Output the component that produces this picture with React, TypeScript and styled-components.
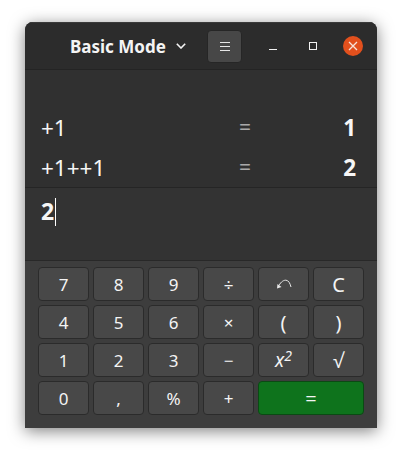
import styled, { createGlobalStyle } from "styled-components";

const GlobalStyle = createGlobalStyle`
  html, body {
    margin: 0;
    padding: 0;
    background: #fff;
    overflow: hidden;
  }
  body {
    font-family: "Noto Sans", "Open Sans", sans-serif;
  }
`;

const Page = styled.div`
  width: 402px;
  height: 456px;
  padding: 22px 25px 28px;
  box-sizing: border-box;
`;

const Window = styled.div`
  width: 352px;
  height: 406px;
  display: flex;
  flex-direction: column;
  border-radius: 8px 8px 0 0;
  overflow: hidden;
  box-shadow: 0 3px 16px rgba(0, 0, 0, 0.5);
  background: #303030;
  color: #f6f6f6;
`;

const HeaderBar = styled.header`
  height: 48px;
  flex: none;
  display: flex;
  align-items: center;
  box-sizing: border-box;
  background: #2c2c2c;
  border-top: 1px solid #3a3a3a;
  border-bottom: 1px solid #242424;
`;

const ModeTitle = styled.div`
  margin-left: 45px;
  width: 118px;
  display: flex;
  align-items: center;
  gap: 10px;
  font-size: 17px;
  font-weight: 700;
  color: #f4f4f4;
  white-space: nowrap;
`;

const MenuButton = styled.div`
  margin-left: 19px;
  width: 35px;
  height: 33px;
  display: flex;
  align-items: center;
  justify-content: center;
  box-sizing: border-box;
  background: #474747;
  border: 1px solid #262626;
  border-radius: 4px;
`;

const WindowControl = styled.div<{ $left: number }>`
  margin-left: ${(p) => p.$left}px;
  width: 20px;
  height: 20px;
  display: flex;
  align-items: center;
  justify-content: center;
`;

const CloseControl = styled(WindowControl)`
  border-radius: 50%;
  background: #e2501d;
`;

const History = styled.section`
  height: 118px;
  flex: none;
  box-sizing: border-box;
  padding-top: 37px;
  background: #303030;
  border-bottom: 1px solid #252525;
`;

const HistoryRow = styled.div`
  height: 40px;
  display: grid;
  grid-template-columns: 184px 40px 1fr;
  align-items: center;
  padding: 0 21px 0 16px;
  font-size: 22.5px;
`;

const Equals = styled.span`
  text-align: center;
  color: #a9a9a9;
  font-size: 21px;
`;

const Result = styled.span`
  text-align: right;
  font-weight: 700;
`;

const InputArea = styled.section`
  height: 73px;
  flex: none;
  box-sizing: border-box;
  padding: 7px 0 0 16px;
  background: #333333;
  border-bottom: 1px solid #282828;
  font-size: 23px;
  font-weight: 700;
  line-height: 32px;
  display: flex;
  align-items: flex-start;
`;

const Caret = styled.span`
  width: 1px;
  height: 28px;
  margin: 3px 0 0 1px;
  background: #fff;
`;

const Keypad = styled.section`
  flex: 1;
  display: grid;
  grid-template-columns: repeat(6, 51px);
  grid-auto-rows: 34px;
  gap: 4px;
  padding: 6px 13px 0;
  background: #3d3d3d;
`;

const Key = styled.button<{ $wide?: boolean; $accent?: boolean; $large?: boolean }>`
  grid-column: ${(p) => (p.$wide ? "span 2" : "auto")};
  padding: 0;
  display: flex;
  align-items: center;
  justify-content: center;
  box-sizing: border-box;
  font-family: inherit;
  font-size: ${(p) => (p.$large ? 20 : 17)}px;
  color: #f4f4f4;
  background: ${(p) => (p.$accent ? "#0e731c" : "#484848")};
  border: 1px solid ${(p) => (p.$accent ? "#0a4a13" : "#2b2b2b")};
  border-radius: 4px;
`;

const Square = styled.span`
  font-style: italic;
  font-size: 19px;
  sup {
    font-size: 14px;
    line-height: 0;
    vertical-align: 6px;
  }
`;

const keys = ["7", "8", "9", "÷", "undo", "C", "4", "5", "6", "×", "(", ")", "1", "2", "3", "−", "x2", "√", "0", ",", "%", "+"];
const largeKeys = ["C", "(", ")", "√"];

function KeyLabel({ value }: { value: string }) {
  if (value === "undo") {
    return (
      <svg width="16" height="10" viewBox="0 0 16 10" fill="none" stroke="#e8e8e8" strokeWidth="1">
        <path d="M3 6.500C5 2.500 8 1 10 1.200C12.500 1.500 14 4 15 8" />
        <path d="M1 9.500L1.500 5L5.500 8Z" fill="#e8e8e8" stroke="none" />
      </svg>
    );
  }
  if (value === "x2") {
    return (
      <Square>
        x<sup>2</sup>
      </Square>
    );
  }
  return <>{value}</>;
}

export default function App() {
  return (
    <Page>
      <GlobalStyle />
      <Window>
        <HeaderBar>
          <ModeTitle>
            Basic Mode
            <svg width="10" height="6" viewBox="0 0 10 6" fill="none" stroke="#f4f4f4" strokeWidth="1.6">
              <path d="M0.800 0.800 L5 5 L9.200 0.800" />
            </svg>
          </ModeTitle>
          <MenuButton>
            <svg width="10" height="9" viewBox="0 0 10 9" stroke="#e6e6e6" strokeWidth="1">
              <path d="M0 0.500H10M0 4.500H10M0 8.500H10" />
            </svg>
          </MenuButton>
          <WindowControl $left={21}>
            <svg width="8" height="8" viewBox="0 0 8 8" stroke="#f2f2f2" strokeWidth="1">
              <path d="M0 7.500H8" />
            </svg>
          </WindowControl>
          <WindowControl $left={20}>
            <svg width="8" height="8" viewBox="0 0 8 8" fill="none" stroke="#f2f2f2" strokeWidth="1">
              <rect x="0.500" y="0.500" width="7" height="7" />
            </svg>
          </WindowControl>
          <CloseControl $left={20}>
            <svg width="10" height="10" viewBox="0 0 10 10" stroke="#f6e4dc" strokeWidth="1.300">
              <path d="M1 1L9 9M9 1L1 9" />
            </svg>
          </CloseControl>
        </HeaderBar>
        <History>
          <HistoryRow>
            <span>+1</span>
            <Equals>=</Equals>
            <Result>1</Result>
          </HistoryRow>
          <HistoryRow>
            <span>+1++1</span>
            <Equals>=</Equals>
            <Result>2</Result>
          </HistoryRow>
        </History>
        <InputArea>
          2<Caret />
        </InputArea>
        <Keypad>
          {keys.map((k) => (
            <Key key={k} $large={largeKeys.includes(k)}>
              <KeyLabel value={k} />
            </Key>
          ))}
          <Key $wide $accent $large>=</Key>
        </Keypad>
      </Window>
    </Page>
  );
}
